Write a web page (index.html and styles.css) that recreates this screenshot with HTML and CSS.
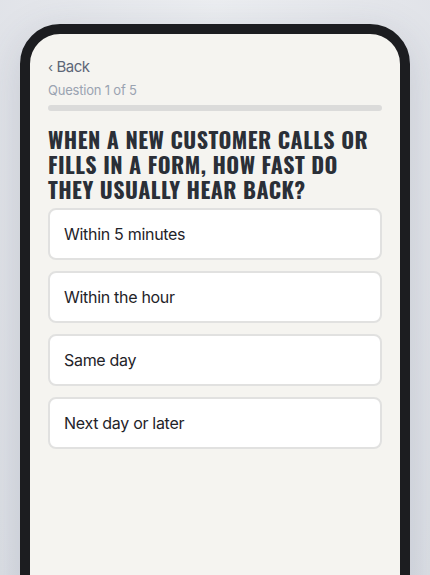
FILE: index.html
```html
<!DOCTYPE html>
<html lang="en">
<head>
<meta charset="utf-8">
<title>Question 1 of 5</title>
<link rel="stylesheet" href="styles.css">
</head>
<body>
<div class="stage">
  <div class="phone">
    <div class="screen">
      <a class="back" href="#"><span class="chev">‹</span>Back</a>
      <div class="step">Question 1 of 5</div>
      <div class="progress"><div class="fill"></div></div>
      <h1 class="question">When a new customer calls or fills in a form, how fast do they usually hear back?</h1>
      <div class="options">
        <button class="option">Within 5 minutes</button>
        <button class="option">Within the hour</button>
        <button class="option">Same day</button>
        <button class="option">Next day or later</button>
      </div>
    </div>
  </div>
</div>
</body>
</html>
```

FILE: styles.css
```css
html, body {
  margin: 0;
  padding: 0;
  height: 100%;
  overflow: hidden;
}
body {
  background: radial-gradient(ellipse at 50% 0%, #eceef1 0%, #e3e5ea 60%, #dcdfe5 100%);
  font-family: "Inter", "Liberation Sans", sans-serif;
}
.stage {
  padding: 24px 20px 0 20px;
}
.phone {
  width: 370px;
  height: 620px;
  border: 10px solid #1c1d20;
  border-radius: 40px;
  background: #f5f4f0;
  box-shadow: 0 10px 40px rgba(60, 70, 100, 0.18);
  overflow: hidden;
}
.screen {
  padding: 23px 18px 0 18px;
  display: flex;
  flex-direction: column;
}
.back {
  font-size: 15px;
  line-height: 20px;
  color: #5d6677;
  text-decoration: none;
  letter-spacing: -0.5px;
}
.chev {
  font-size: 13px;
  margin-right: 4px;
}
.step {
  margin-top: 4px;
  font-size: 13px;
  line-height: 18px;
  color: #9aa3b1;
  letter-spacing: -0.2px;
}
.progress {
  margin-top: 6px;
  height: 6px;
  border-radius: 3px;
  background: #dbdbda;
}
.fill {
  width: 0;
  height: 100%;
}
.question {
  margin: 15.5px 0 0 0;
  font-family: "Oswald", "Liberation Sans Narrow", "DejaVu Sans Condensed", sans-serif;
  font-weight: 700;
  font-size: 22px;
  line-height: 25px;
  text-transform: uppercase;
  color: #2a2f37;
  letter-spacing: 0.45px;
}
.options {
  margin-top: 6px;
  display: flex;
  flex-direction: column;
  gap: 11px;
}
.option {
  display: block;
  width: 100%;
  text-align: left;
  background: #ffffff;
  border: 2px solid #e1e1e0;
  border-radius: 8px;
  padding: 12px 14px;
  font-family: "Inter", "Liberation Sans", sans-serif;
  font-size: 16px;
  line-height: 24px;
  color: #1f2329;
  letter-spacing: -0.3px;
}
```
